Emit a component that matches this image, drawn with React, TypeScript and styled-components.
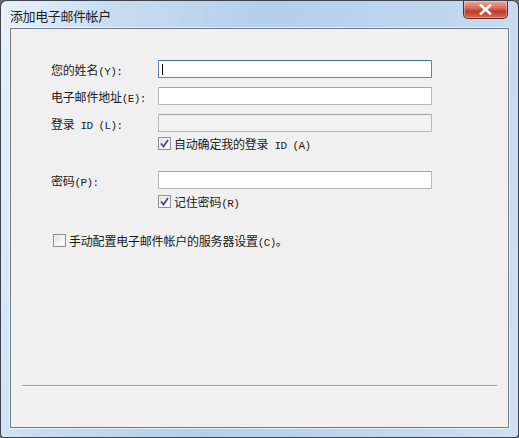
import styled, { createGlobalStyle } from "styled-components";

const Global = createGlobalStyle`
  html, body { margin: 0; padding: 0; background: #6b6b6b; }
  body { font-family: "Noto Sans CJK SC", "Liberation Sans", sans-serif; }
`;

const Window = styled.div`
  width: 519px;
  height: 438px;
  box-sizing: border-box;
  display: flex;
  flex-direction: column;
  border: 1px solid #3c4450;
  border-radius: 7px 7px 4px 4px;
  background: linear-gradient(100deg, #eaf2fa 0%, #c9ddf1 18%, #b4cfea 45%, #bfd6ee 75%, #cfe1f3 100%);
  overflow: hidden;
`;

const TitleBar = styled.div`
  height: 27px;
  display: flex;
  justify-content: space-between;
  align-items: flex-start;
  padding: 0 10px 0 9px;
`;

const Title = styled.div`
  font-size: 13px;
  line-height: 13px;
  margin-top: 8px;
  color: #1e1e1e;
  letter-spacing: -0.4px;
`;

const CloseButton = styled.div`
  width: 45px;
  height: 18px;
  box-sizing: border-box;
  border: 1px solid #5c2a24;
  border-top: none;
  border-radius: 0 0 5px 5px;
  background: linear-gradient(#e8a89c 0%, #d8705e 40%, #c23a26 60%, #d06a50 100%);
  box-shadow: inset 0 0 0 1px rgba(255, 255, 255, 0.35);
  display: flex;
  align-items: center;
  justify-content: center;
`;

const Client = styled.div`
  flex: 1;
  margin: 0 9px 9px 9px;
  border: 1px solid #6e7c8d;
  background: #f0f0f0;
  display: flex;
  flex-direction: column;
  box-shadow: 0 0 0 1px rgba(255, 255, 255, 0.6);
`;

const Form = styled.div`
  padding: 31px 0 0 40px;
  display: flex;
  flex-direction: column;
  font-size: 12px;
  color: #1a1a1a;
`;

const Row = styled.div<{ $top: number }>`
  display: grid;
  grid-template-columns: 107px 274px;
  align-items: center;
  height: 18px;
  margin-top: ${(p) => p.$top}px;
`;

const Label = styled.span`
  white-space: nowrap;
  letter-spacing: -0.2px;
`;

// ASCII part of a label, drawn half-width as in the system dialog font
const Latin = styled.span`
  font-family: "Liberation Mono", "DejaVu Sans Mono", monospace;
  font-size: 11px;
  letter-spacing: -0.6px;
  color: #1a1a1a;
`;

const Input = styled.div<{ $focused?: boolean; $disabled?: boolean }>`
  height: 18px;
  box-sizing: border-box;
  border: 1px solid ${(p) => (p.$focused ? "#5a8ab8" : "#b5b8bd")};
  border-top-color: ${(p) => (p.$focused ? "#3d6f9e" : "#a0a3a8")};
  background: ${(p) => (p.$disabled ? "#f2f2f2" : "#ffffff")};
  border-radius: 1px;
  position: relative;
`;

const Caret = styled.span`
  position: absolute;
  left: 3px;
  top: 3px;
  width: 1px;
  height: 11px;
  background: #000;
`;

const CheckRow = styled.label<{ $top: number; $indent: number }>`
  display: flex;
  align-items: center;
  gap: 3px;
  height: 14px;
  margin-top: ${(p) => p.$top}px;
  margin-left: ${(p) => p.$indent}px;
  font-size: 12px;
  white-space: nowrap;
  letter-spacing: -0.2px;
`;

const Box = styled.span`
  width: 13px;
  height: 13px;
  flex: none;
  box-sizing: border-box;
  border: 1px solid #8e8f8f;
  background: linear-gradient(135deg, #dcdcdc 0%, #f6f6f6 60%, #ffffff 100%);
  box-shadow: inset 0 0 0 1px #f4f4f4;
  display: flex;
  align-items: center;
  justify-content: center;
`;

const Separator = styled.div`
  margin: auto 11px 40px 11px;
  height: 1px;
  background: #a0a0a0;
  border-bottom: 1px solid #ffffff;
`;

const Check = () => (
  <svg width="9" height="9" viewBox="0 0 9 9">
    <path d="M1 4.5 L3.5 7.5 L8 1" fill="none" stroke="#3b4f8c" strokeWidth="1.8" />
  </svg>
);

const CheckBox = ({ checked }: { checked?: boolean }) => <Box>{checked && <Check />}</Box>;

export default function App() {
  return (
    <>
      <Global />
      <Window>
        <TitleBar>
          <Title>添加电子邮件帐户</Title>
          <CloseButton>
            <svg width="13" height="11" viewBox="0 0 13 11">
              <path
                d="M2 1.5 L11 9.5 M11 1.5 L2 9.5"
                stroke="#ffffff"
                strokeWidth="2.6"
                strokeLinecap="square"
              />
            </svg>
          </CloseButton>
        </TitleBar>
        <Client>
          <Form>
            <Row $top={0}>
              <Label>
                您的姓名<Latin>(Y):</Latin>
              </Label>
              <Input $focused>
                <Caret />
              </Input>
            </Row>
            <Row $top={9}>
              <Label>
                电子邮件地址<Latin>(E):</Latin>
              </Label>
              <Input />
            </Row>
            <Row $top={9}>
              <Label>
                登录<Latin> ID (L):</Latin>
              </Label>
              <Input $disabled />
            </Row>
            <CheckRow $top={4} $indent={107}>
              <CheckBox checked />
              <span>
                自动确定我的登录<Latin> ID (A)</Latin>
              </span>
            </CheckRow>
            <Row $top={21}>
              <Label>
                密码<Latin>(P):</Latin>
              </Label>
              <Input />
            </Row>
            <CheckRow $top={5} $indent={107}>
              <CheckBox checked />
              <span>
                记住密码<Latin>(R)</Latin>
              </span>
            </CheckRow>
            <CheckRow $top={25} $indent={2}>
              <CheckBox />
              <span>
                手动配置电子邮件帐户的服务器设置<Latin>(C)</Latin>。
              </span>
            </CheckRow>
          </Form>
          <Separator />
        </Client>
      </Window>
    </>
  );
}
